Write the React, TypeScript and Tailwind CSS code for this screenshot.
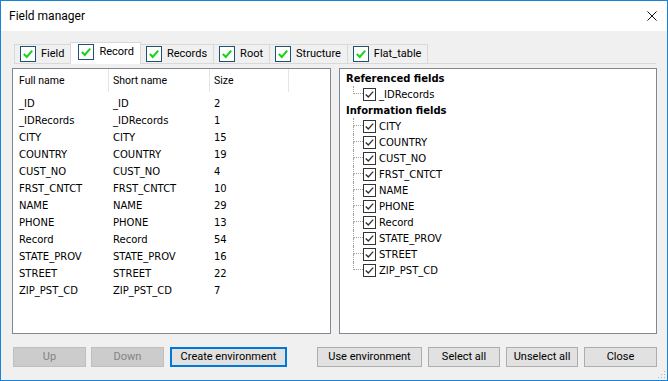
import React from "react";

const FIELDS: [string, string, number][] = [
  ["_ID", "_ID", 2],
  ["_IDRecords", "_IDRecords", 1],
  ["CITY", "CITY", 15],
  ["COUNTRY", "COUNTRY", 19],
  ["CUST_NO", "CUST_NO", 4],
  ["FRST_CNTCT", "FRST_CNTCT", 10],
  ["NAME", "NAME", 29],
  ["PHONE", "PHONE", 13],
  ["Record", "Record", 54],
  ["STATE_PROV", "STATE_PROV", 16],
  ["STREET", "STREET", 22],
  ["ZIP_PST_CD", "ZIP_PST_CD", 7],
];

const TABS = ["Field", "Record", "Records", "Root", "Structure", "Flat_table"];
const SELECTED_TAB = "Record";

const INFO_FIELDS = [
  "CITY",
  "COUNTRY",
  "CUST_NO",
  "FRST_CNTCT",
  "NAME",
  "PHONE",
  "Record",
  "STATE_PROV",
  "STREET",
  "ZIP_PST_CD",
];

function TabCheck() {
  return (
    <span className="flex h-[16px] w-[16px] shrink-0 items-center justify-center border border-[#1f5272] bg-white">
      <svg viewBox="0 0 14 14" className="h-[14px] w-[14px]">
        <path d="M2.8 7 L5.8 10 L11.2 3.6" stroke="#16d416" strokeWidth="2" fill="none" />
      </svg>
    </span>
  );
}

function TreeCheck() {
  return (
    <span className="flex h-[13px] w-[13px] shrink-0 items-center justify-center border border-[#333333] bg-white">
      <svg viewBox="0 0 11 11" className="h-[11px] w-[11px]">
        <path d="M1.8 5.4 L4.3 8 L9.2 2.6" stroke="#333333" strokeWidth="1.4" fill="none" />
      </svg>
    </span>
  );
}

function TreeItem({ label, last }: { label: string; last: boolean }) {
  return (
    <div className="ml-[13px] flex h-[16px] items-center">
      <div className="flex h-full w-[10px] flex-col">
        <div className="h-[8px] border-b border-l border-dotted border-[#a0a0a0]" />
        <div className={last ? "flex-1" : "flex-1 border-l border-dotted border-[#a0a0a0]"} />
      </div>
      <TreeCheck />
      <span className="ml-[3px]">{label}</span>
    </div>
  );
}

function Button({
  label,
  width,
  disabled,
  focused,
}: {
  label: string;
  width: string;
  disabled?: boolean;
  focused?: boolean;
}) {
  let cls = "border-[#adadad] bg-[#e1e1e1] text-black";
  if (disabled) cls = "border-[#bfbfbf] bg-[#cccccc] text-[#838383]";
  if (focused) cls = "border-2 border-[#0078d7] bg-[#e1e1e1] text-black";
  return (
    <div className={`flex h-[20px] items-center justify-center border text-[11px] ${width} ${cls}`}>
      {label}
    </div>
  );
}

export default function App() {
  return (
    <div className="flex h-[381px] w-[668px] flex-col border border-[#1883d7] bg-white font-['Roboto',sans-serif] text-black">
      <div className="flex h-[30px] shrink-0 items-center justify-between pl-[8px] pr-[10px]">
        <span className="text-[12px]">Field manager</span>
        <svg viewBox="0 0 10 10" className="h-[10px] w-[10px]">
          <path d="M0.5 0.5 L9.5 9.5 M9.5 0.5 L0.5 9.5" stroke="#111" strokeWidth="1" />
        </svg>
      </div>

      <div className="relative flex flex-1 flex-col bg-[#f0f0f0] pl-[11px] pr-[10px] pt-[11px]">
        <div className="ml-[2px] mr-[1px] flex h-[22px] items-end border-b border-[#d9d9d9]">
          {TABS.map((t, i) => {
            const sel = t === SELECTED_TAB;
            return (
              <div
                key={t}
                className={
                  sel
                    ? "relative z-10 -mb-px -ml-px flex h-[22px] items-center gap-[5px] border border-b-0 border-[#d9d9d9] bg-white pl-[7px] pr-[6px] pb-[3px] text-[11px]"
                    : `flex h-[19px] items-center gap-[5px] border-r border-t border-[#d9d9d9] pl-[5px] pr-[6px] text-[11px] ${i === 0 ? "border-l" : ""}`
                }
              >
                <TabCheck />
                <span>{t}</span>
              </div>
            );
          })}
        </div>

        <div className="mt-[4px] flex h-[266px] gap-[8px]">
          <div className="w-[319px] border border-[#828790] bg-white">
            <div className="flex h-[23px] items-center text-[10.5px]">
              <div className="flex h-full w-[96px] items-center border-r border-[#e5e5e5] pl-[6px]">Full name</div>
              <div className="flex h-full w-[101px] items-center border-r border-[#e5e5e5] pl-[4px]">Short name</div>
              <div className="flex h-full w-[79px] items-center border-r border-[#e5e5e5] pl-[4px]">Size</div>
            </div>
            <div className="pt-[3px] font-['DejaVu_Sans',sans-serif] text-[10px]">
              {FIELDS.map(([full, short, size]) => (
                <div key={full} className="flex h-[17px] items-center">
                  <div className="w-[96px] pl-[6px]">{full}</div>
                  <div className="w-[101px] pl-[4px]">{short}</div>
                  <div className="w-[79px] pl-[4px]">{size}</div>
                </div>
              ))}
            </div>
          </div>

          <div className="flex-1 border border-[#828790] bg-white pt-[1px] font-['DejaVu_Sans',sans-serif] text-[10px]">
            <div className="flex h-[16px] items-center pl-[6px] font-bold">Referenced fields</div>
            <TreeItem label="_IDRecords" last />
            <div className="flex h-[16px] items-center pl-[6px] font-bold">Information fields</div>
            {INFO_FIELDS.map((f, i) => (
              <TreeItem key={f} label={f} last={i === INFO_FIELDS.length - 1} />
            ))}
          </div>
        </div>

        <div className="mt-[13px] flex gap-[5px] pl-px">
          <Button label="Up" width="w-[73px]" disabled />
          <Button label="Down" width="w-[73px]" disabled />
          <div className="ml-px">
            <Button label="Create environment" width="w-[117px]" focused />
          </div>
          <div className="ml-auto flex gap-[6px]">
            <Button label="Use environment" width="w-[105px]" />
            <Button label="Select all" width="w-[72px]" />
            <Button label="Unselect all" width="w-[72px]" />
            <Button label="Close" width="w-[73px]" />
          </div>
        </div>

        <svg viewBox="0 0 8 8" className="absolute bottom-[1px] right-[1px] h-[8px] w-[8px]">
          <rect x="6" y="0" width="1" height="1" fill="#b5b5b5" />
          <rect x="3" y="3" width="1" height="1" fill="#b5b5b5" />
          <rect x="6" y="3" width="1" height="1" fill="#b5b5b5" />
          <rect x="0" y="6" width="1" height="1" fill="#b5b5b5" />
          <rect x="3" y="6" width="1" height="1" fill="#b5b5b5" />
          <rect x="6" y="6" width="1" height="1" fill="#b5b5b5" />
        </svg>
      </div>
    </div>
  );
}
